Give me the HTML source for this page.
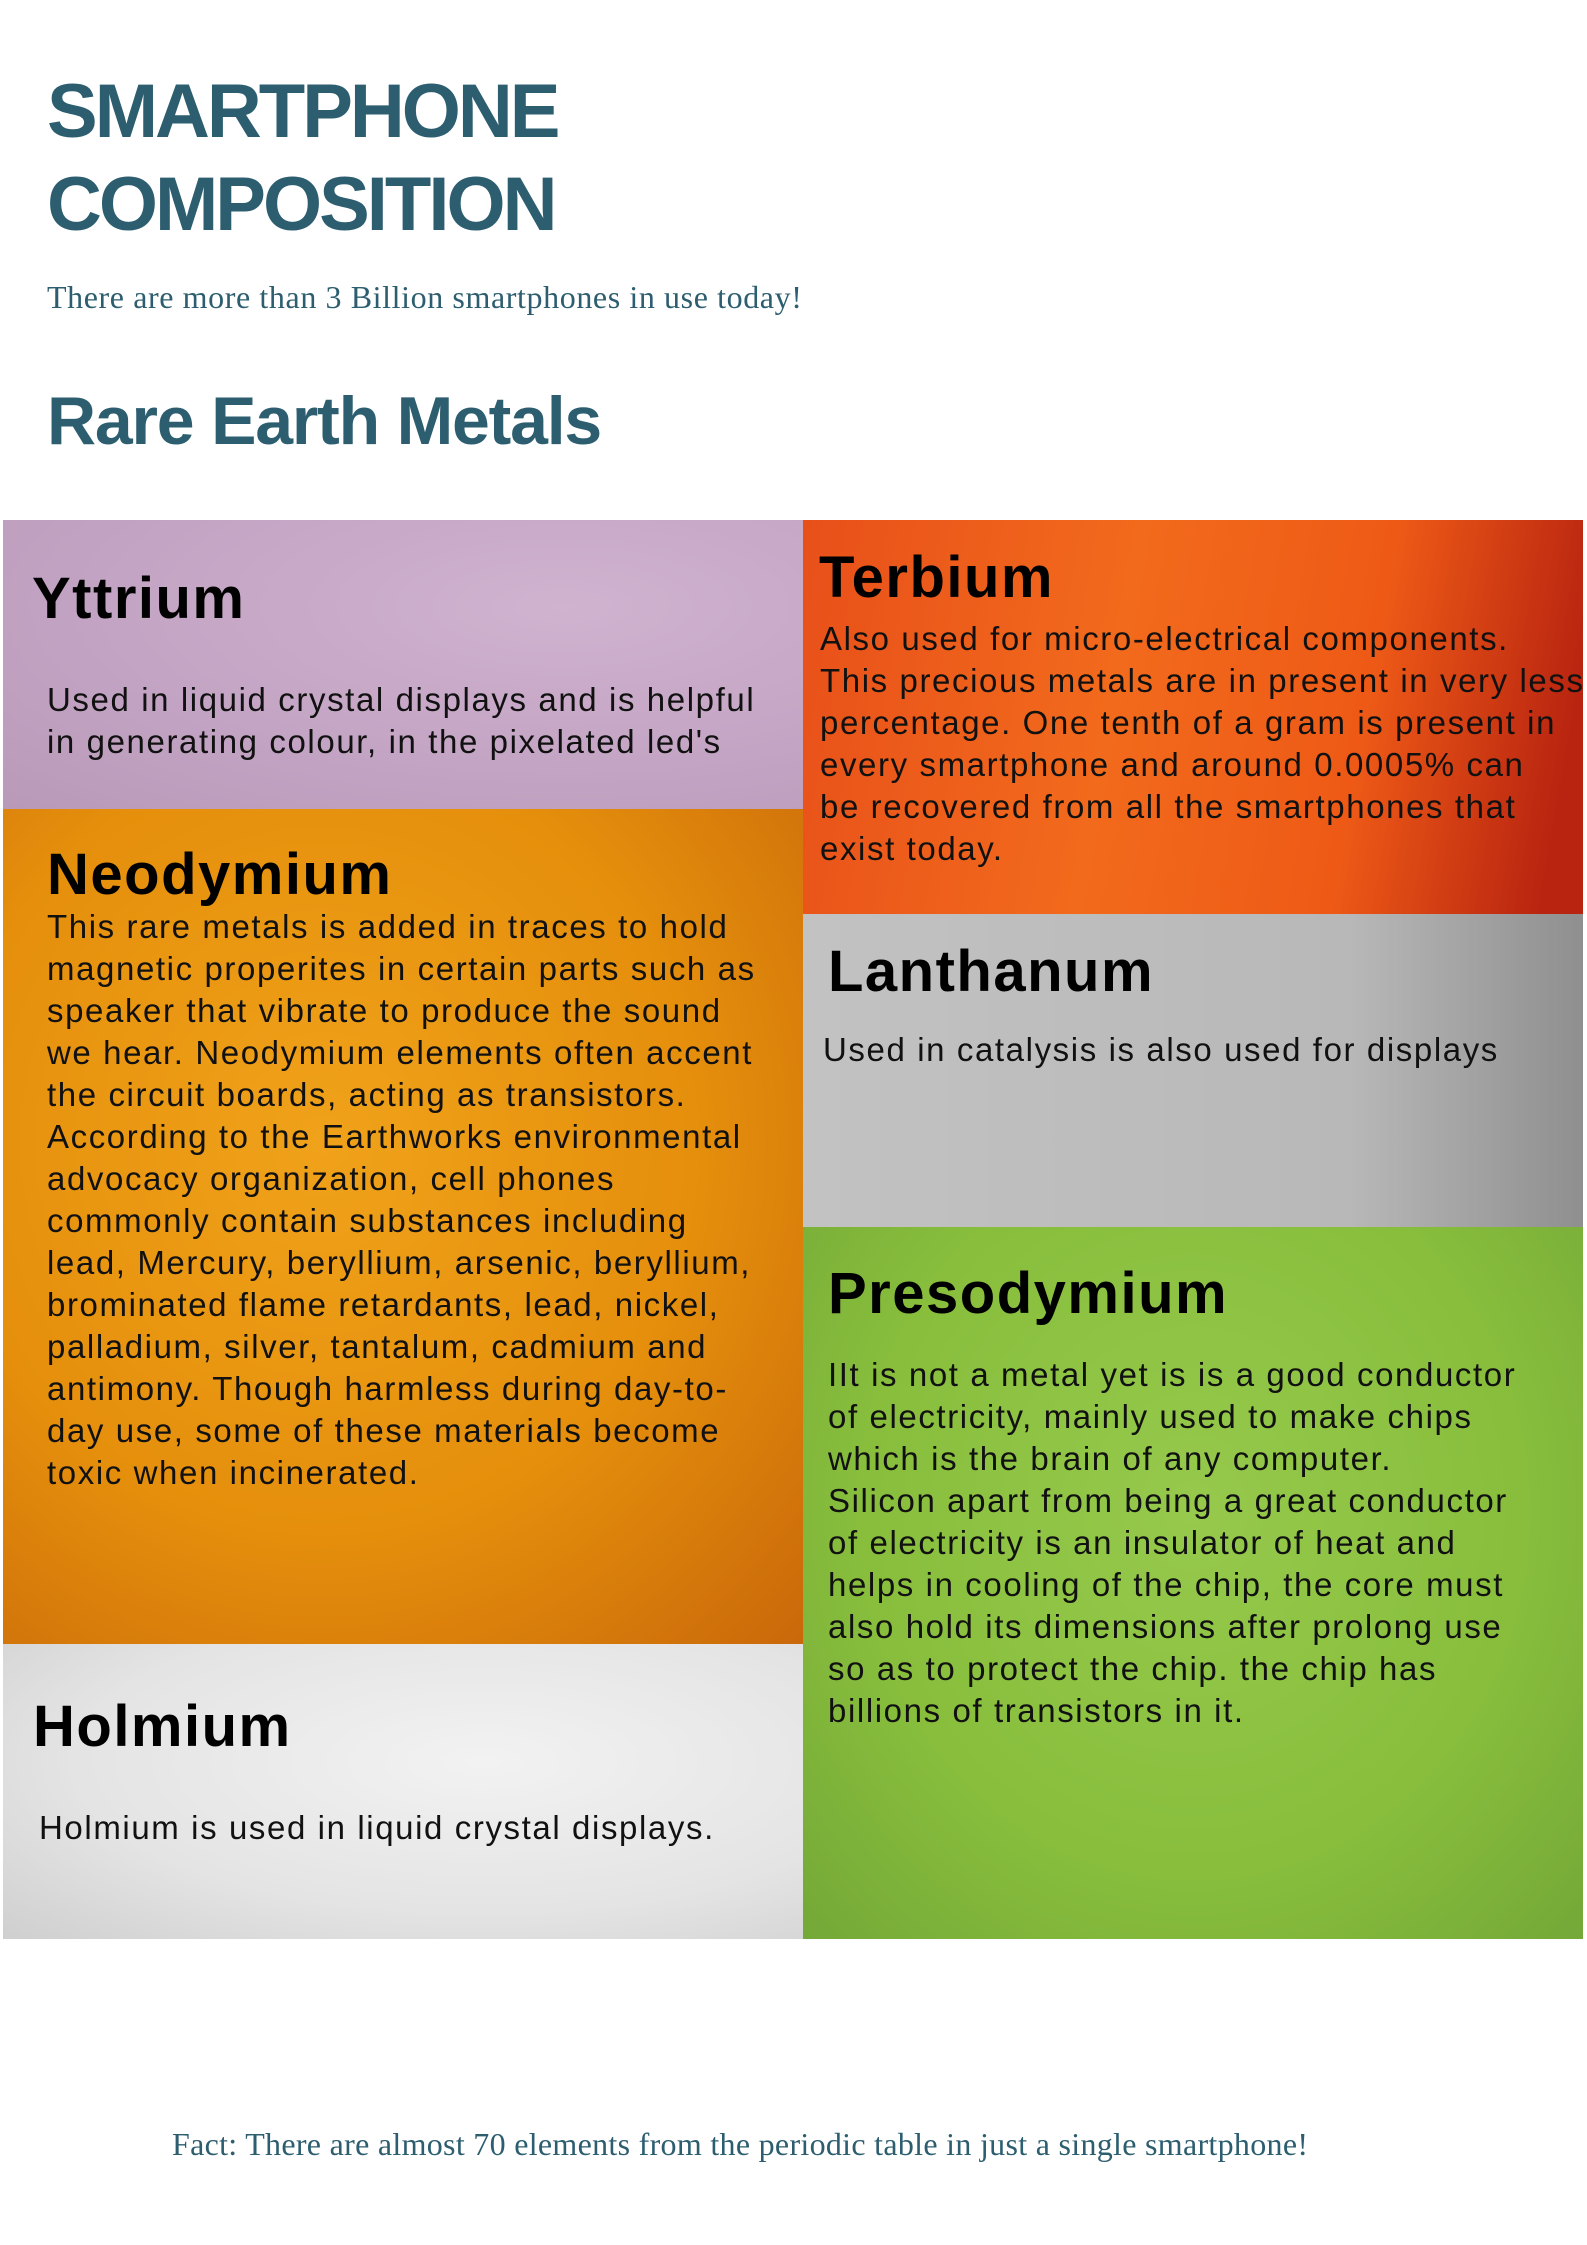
<!DOCTYPE html>
<html><head><meta charset="utf-8"><style>
body{margin:0;width:1587px;height:2245px;background:#fff;position:relative;overflow:hidden;font-family:"Liberation Sans",sans-serif}
.a{position:absolute;white-space:nowrap}
.t{color:#2d5e70;font-weight:bold;font-size:76px;left:47px;line-height:93px;top:65px;letter-spacing:-3px}
.s{font-family:"Liberation Serif",serif;color:#2d5e70;font-size:32px}
.h2{color:#2d5e70;font-weight:bold;font-size:68px;left:47px;top:382px;letter-spacing:-1.2px}
.box{position:absolute}
.hd{position:absolute;font-weight:bold;font-size:58px;color:#000;white-space:nowrap;letter-spacing:1.5px}
.bd{position:absolute;font-size:33px;line-height:42px;color:#111;white-space:nowrap;letter-spacing:1.6px}
</style></head><body>
<div class="a t">SMARTPHONE<br>COMPOSITION</div>
<div class="a s" style="left:47px;top:279px;letter-spacing:0.6px">There are more than 3 Billion smartphones in use today!</div>
<div class="a h2">Rare Earth Metals</div>

<div class="box" style="left:3px;top:520px;width:800px;height:289px;background:radial-gradient(ellipse at 70% 30%,#cfb3cf,#c3a3c3 60%,#b89ab8)"></div>
<div class="box" style="left:3px;top:809px;width:800px;height:835px;background:radial-gradient(ellipse at 40% 40%,#f0a21a,#e58f0c 55%,#c9680a)"></div>
<div class="box" style="left:3px;top:1644px;width:800px;height:295px;background:radial-gradient(ellipse at 60% 40%,#f2f2f2,#e4e4e4 60%,#cfcfcf)"></div>
<div class="box" style="left:803px;top:520px;width:780px;height:394px;background:linear-gradient(100deg,#e8501a,#f26a1c 40%,#ee5a16 70%,#b82410 95%)"></div>
<div class="box" style="left:803px;top:914px;width:780px;height:313px;background:linear-gradient(90deg,#c2c2c2,#b8b8b8 70%,#8f8f8f)"></div>
<div class="box" style="left:803px;top:1227px;width:780px;height:712px;background:radial-gradient(ellipse at 50% 40%,#96c94c,#88be3c 60%,#74a838)"></div>

<div class="hd" style="left:32px;top:565px">Yttrium</div>
<div class="bd" style="left:47px;top:679px">Used in liquid crystal displays and is helpful<br>in generating colour, in the pixelated led's</div>

<div class="hd" style="left:47px;top:841px">Neodymium</div>
<div class="bd" style="left:47px;top:906px">This rare metals is added in traces to hold<br>magnetic properites in certain parts such as<br>speaker that vibrate to produce the sound<br>we hear. Neodymium elements often accent<br>the circuit boards, acting as transistors.<br>According to the Earthworks environmental<br>advocacy organization, cell phones<br>commonly contain substances including<br>lead, Mercury, beryllium, arsenic, beryllium,<br>brominated flame retardants, lead, nickel,<br>palladium, silver, tantalum, cadmium and<br>antimony. Though harmless during day-to-<br>day use, some of these materials become<br>toxic when incinerated.</div>

<div class="hd" style="left:33px;top:1693px">Holmium</div>
<div class="bd" style="left:39px;top:1807px">Holmium is used in liquid crystal displays.</div>

<div class="hd" style="left:819px;top:544px">Terbium</div>
<div class="bd" style="left:820px;top:618px">Also used for micro-electrical components.<br>This precious metals are in present in very less<br>percentage. One tenth of a gram is present in<br>every smartphone and around 0.0005% can<br>be recovered from all the smartphones that<br>exist today.</div>

<div class="hd" style="left:828px;top:938px">Lanthanum</div>
<div class="bd" style="left:823px;top:1029px">Used in catalysis is also used for displays</div>

<div class="hd" style="left:828px;top:1260px">Presodymium</div>
<div class="bd" style="left:828px;top:1354px">IIt is not a metal yet is is a good conductor<br>of electricity, mainly used to make chips<br>which is the brain of any computer.<br>Silicon apart from being a great conductor<br>of electricity is an insulator of heat and<br>helps in cooling of the chip, the core must<br>also hold its dimensions after prolong use<br>so as to protect the chip. the chip has<br>billions of transistors in it.</div>

<div class="a s" style="left:172px;top:2126px;letter-spacing:0.3px">Fact: There are almost 70 elements from the periodic table in just a single smartphone!</div>
</body></html>
